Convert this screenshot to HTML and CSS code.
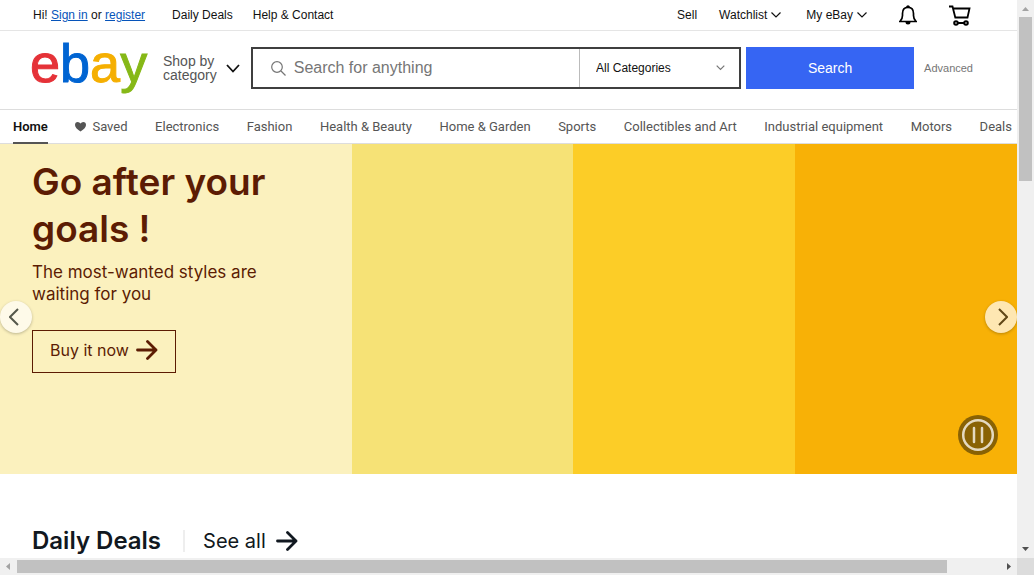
FILE: index.html
```html
<!DOCTYPE html>
<html lang="en">
<head>
<meta charset="utf-8">
<title>Electronics, Cars, Fashion, Collectibles &amp; More | eBay</title>
<link rel="stylesheet" href="styles.css">
</head>
<body>
<div class="window">
  <div class="page">
    <div class="topbar">
      <span class="greeting">Hi! <a href="#">Sign in</a> or <a href="#">register</a></span>
      <a class="toplink" href="#">Daily Deals</a>
      <a class="toplink" href="#">Help &amp; Contact</a>
      <div class="topbar-right">
        <a class="toplink" href="#">Sell</a>
        <button class="topmenu" type="button">Watchlist<svg width="10" height="6" viewBox="0 0 10 6"><path d="M.5.5 5 5 9.500.5"/></svg></button>
        <button class="topmenu" type="button">My eBay<svg width="10" height="6" viewBox="0 0 10 6"><path d="M.5.5 5 5 9.500.5"/></svg></button>
        <button class="bell" type="button" aria-label="Notifications"><svg width="18" height="20" viewBox="0 0 18 20"><path d="M0 16.500H18M1.300 16Q3.500 13.500 3.500 10.500V8.500Q3.500 2.300 9 2.300T14.500 8.500V10.500Q14.500 13.500 16.700 16" fill="none" stroke="#000" stroke-width="1.700"/><path d="M6.500 17h5q0 2.500-2.500 2.500T6.500 17ZM7 2Q7.500.3 9 .3T11 2Z"/></svg></button>
        <a class="cart" href="#" aria-label="Cart"><svg width="22" height="21" viewBox="0 0 22 21"><path d="M0 1.500H3.500L6.300 12.500H18.500L20.500 3.500H4.500M7 18H16" fill="none" stroke="#000" stroke-width="1.800"/><circle cx="7" cy="18" r="1.800"/><circle cx="17" cy="18" r="1.800"/></svg></a>
      </div>
    </div>

    <header class="header">
      <a class="logo" href="#" aria-label="eBay"><span class="red">e</span><span class="blue">b</span><span class="gold">a</span><span class="green">y</span></a>
      <button class="shop" type="button"><span>Shop by<br>category</span><svg width="14" height="9" viewBox="0 0 14 9"><path d="M1 1 7 7.500 13 1"/></svg></button>
      <form class="search">
        <div class="searchbox">
          <svg class="glass" width="15" height="15" viewBox="0 0 15 15"><circle cx="6" cy="6" r="5.300"/><path d="m10 10 4.500 4.500"/></svg>
          <input type="text" placeholder="Search for anything" aria-label="Search for anything">
          <div class="category">
            <select aria-label="Category"><option>All Categories</option></select>
            <svg width="9" height="6" viewBox="0 0 9 6"><path d="M.7.7 4.500 4.500 8.300.7"/></svg>
          </div>
        </div>
        <button class="submit" type="submit">Search</button>
      </form>
      <a class="advanced" href="#">Advanced</a>
    </header>

    <nav class="nav">
      <a class="current" href="#">Home</a>
      <a href="#"><svg width="11" height="10" viewBox="0 0 11 10"><path d="M5.500 9.500Q0 6 0 3T2.800 0Q4.500 0 5.500 1.600 6.500 0 8.200 0 11 0 11 3T5.500 9.500Z"/></svg>Saved</a>
      <a href="#">Electronics</a>
      <a href="#">Fashion</a>
      <a href="#">Health &amp; Beauty</a>
      <a href="#">Home &amp; Garden</a>
      <a href="#">Sports</a>
      <a href="#">Collectibles and Art</a>
      <a href="#">Industrial equipment</a>
      <a href="#">Motors</a>
      <a href="#">Deals</a>
    </nav>

    <section class="hero">
      <div class="pitch">
        <h1>Go after your goals !</h1>
        <p>The most-wanted styles are waiting for you</p>
        <a class="buy" href="#">Buy it now<svg class="arrow" width="22" height="20" viewBox="0 0 22 20"><path d="M1.500 10H20M11.500 1.500 20 10l-8.500 8.500"/></svg></a>
      </div>
      <div class="tile pale"></div>
      <div class="tile bright"></div>
      <div class="tile deep"></div>
      <button class="slide prev" type="button" aria-label="Previous"><svg width="10" height="18" viewBox="0 0 10 18"><path d="M9 1 1 9l8 8"/></svg></button>
      <button class="slide next" type="button" aria-label="Next"><svg width="10" height="18" viewBox="0 0 10 18"><path d="m1 1 8 8-8 8"/></svg></button>
      <button class="pause" type="button" aria-label="Pause"><svg width="40" height="40" viewBox="0 0 40 40"><circle class="disc" cx="20" cy="20" r="20"/><circle class="ring" cx="20" cy="20" r="14.800"/><path class="bars" d="M16 13V27M24 13V27"/></svg></button>
    </section>

    <section class="deals">
      <h2>Daily Deals</h2>
      <a href="#">See all<svg class="arrow" width="22" height="20" viewBox="0 0 22 20"><path d="M1.500 10H20M11.500 1.500 20 10l-8.500 8.500"/></svg></a>
    </section>
  </div>

  <div class="vscroll">
    <svg width="17" height="17" viewBox="0 0 17 17"><path fill="#a3a3a3" d="M5 11h7L8.500 7Z"/></svg>
    <div class="vtrack"><div class="vthumb"></div></div>
    <svg width="17" height="17" viewBox="0 0 17 17"><path fill="#505050" d="M5 6h7L8.500 10Z"/></svg>
  </div>
  <div class="hscroll">
    <svg width="17" height="17" viewBox="0 0 17 17"><path fill="#a3a3a3" d="M10 5v7L6 8.500Z"/></svg>
    <div class="htrack"><div class="hthumb"></div></div>
    <svg width="17" height="17" viewBox="0 0 17 17"><path fill="#505050" d="M7 5v7l4-3.500Z"/></svg>
  </div>
  <div class="corner"></div>
</div>
</body>
</html>
```
FILE: styles.css
```css
* { box-sizing: border-box; }

body {
  margin: 0;
  overflow: hidden;
  background: #fff;
  color: #111;
  font: 12px/16px "Liberation Sans", Arial, sans-serif;
}

a { color: inherit; text-decoration: none; }
button { padding: 0; border: 0; background: none; color: inherit; font: inherit; cursor: pointer; }
svg { display: block; flex: none; }

.window {
  display: grid;
  grid-template: minmax(0, 1fr) 17px / minmax(0, 1fr) 17px;
  height: 100vh;
}

.page { overflow: hidden; }

/* Top links */
.topbar {
  display: flex;
  align-items: center;
  height: 31px;
  padding: 0 46px 0 33px;
  border-bottom: 1px solid #e5e5e5;
}
.greeting { margin-right: 7px; }
.greeting a { color: #0654ba; text-decoration: underline; }
.toplink { margin-left: 20px; }
.topbar-right { display: flex; align-items: center; margin-left: auto; }
.topmenu { display: flex; align-items: center; gap: 4px; margin-left: 22px; }
.topmenu + .topmenu { margin-left: 25px; }
.topmenu path { fill: none; stroke: #111; stroke-width: 1.200; }
.bell { margin-left: 32px; }
.cart { margin-left: 32px; }
.cart circle { fill: #fff; stroke: #000; stroke-width: 2; }

/* Logo and search */
.header {
  display: flex;
  align-items: center;
  height: 79px;
  padding: 0 44px 4px 30px;
  border-bottom: 1px solid #ddd;
}
.logo { display: flex; width: 121px; padding-bottom: 10px; font-size: 54px; line-height: 60px; }
.logo span { -webkit-text-stroke: 1px currentColor; }
.red { color: #e53238; }
.blue { color: #0064d2; }
.gold { color: #f5af02; }
.green { color: #86b817; }

.shop { display: flex; align-items: center; gap: 9px; margin-left: 12px; color: #555; font-size: 14px; line-height: 14px; text-align: left; }
.shop path { fill: none; stroke: #111; stroke-width: 1.800; }
.search { display: flex; flex: 1; gap: 5px; height: 42px; margin-left: 11px; }
.searchbox { display: flex; flex: 1; align-items: center; border: 2px solid #3f3f3f; }
.glass { margin: 0 8px 0 18px; }
.glass * { fill: none; stroke: #767676; stroke-width: 1.200; }
.searchbox input { flex: 1; min-width: 0; height: 100%; padding: 0; border: 0; outline: 0; font: 16px "Liberation Sans", Arial, sans-serif; }
.searchbox input::placeholder { color: #767676; opacity: 1; }
.category { display: grid; align-items: center; width: 160px; height: 100%; border-left: 1px solid #bbb; }
.category > * { grid-area: 1 / 1; }
.category select { width: 100%; height: 100%; padding: 0 16px; border: 0; outline: 0; appearance: none; background: none; color: #111; font: inherit; }
.category svg { justify-self: end; margin-right: 14px; pointer-events: none; }
.category path { fill: none; stroke: #767676; stroke-width: 1.200; }
.submit { width: 168px; background: #3665f3; color: #fff; font-size: 14px; }
.advanced { margin-left: 10px; color: #767676; font-size: 11px; }

/* Departments */
.nav {
  display: flex;
  justify-content: space-between;
  height: 34px;
  padding: 0 5px 0 13px;
  border-bottom: 1px solid #ddd;
  color: #555;
  font: 13px/33px Roboto, sans-serif;
  white-space: nowrap;
}
.nav a { display: flex; align-items: center; gap: 6px; }
.nav path { fill: #555; }
.nav .current { height: 34px; border-bottom: 2px solid #555; color: #111; font-weight: 600; }

/* Banner */
.hero {
  position: relative;
  display: grid;
  grid-template-columns: 46fr 29fr 29fr 29fr;
  min-height: 330px;
  color: #5c1c03;
  font-family: Inter, sans-serif;
}
.pitch { padding: 14px 60px 0 32px; background: #fbf1be; }
.pale { background: #f6e276; }
.bright { background: #fccd27; }
.deep { background: #f8b106; }
.hero h1 { margin: 0; font-size: 37px; line-height: 47px; font-weight: 600; }
.hero p { margin: 9px 0 25px; font-size: 17px; line-height: 22px; }
.buy { display: inline-flex; align-items: center; gap: 7px; height: 43px; padding: 0 17px 3px; border: 1px solid; font-size: 16px; }
.arrow path { fill: none; stroke: currentColor; stroke-width: 2.800; stroke-linecap: round; stroke-linejoin: round; }

.slide {
  position: absolute;
  top: 157px;
  display: flex;
  align-items: center;
  width: 32px;
  height: 32px;
  border-radius: 50%;
  box-shadow: 0 1px 3px rgba(0, 0, 0, .25);
}
.slide path { fill: none; stroke-width: 2; }
.prev { left: 0; padding-left: 9px; background: #fefae9; }
.prev path { stroke: #55584b; }
.next { right: 0; padding-left: 13px; background: #fee7b2; }
.next path { stroke: #604717; }
.pause { position: absolute; right: 19px; bottom: 19px; }
.disc { fill: #896204; }
.ring { fill: none; stroke: #e4d9c0; stroke-width: 2.500; }
.bars { stroke: #e4d9c0; stroke-width: 2.500; stroke-linecap: round; }

/* Deals heading */
.deals { display: flex; align-items: center; padding: 51px 32px 0; color: #111820; font: 20px/32px Inter, sans-serif; }
.deals h2 { margin: 0 22px 0 0; font-size: 24px; line-height: 32px; font-weight: 600; }
.deals a { display: flex; align-items: center; gap: 10px; padding-left: 18px; border-left: 2px solid #eee; line-height: 22px; }

/* Scrollbars */
.vscroll { display: flex; flex-direction: column; background: #f0f0f0; }
.vtrack { flex: 1; }
.vthumb { width: 13px; height: 31.300%; margin: 0 auto; background: #c1c1c1; }
.hscroll { display: flex; background: #f0f0f0; }
.htrack { flex: 1; padding: 2px 0; }
.hthumb { width: 94.600%; height: 13px; background: #c1c1c1; }
.corner { background: #dcdcdc; }
```
